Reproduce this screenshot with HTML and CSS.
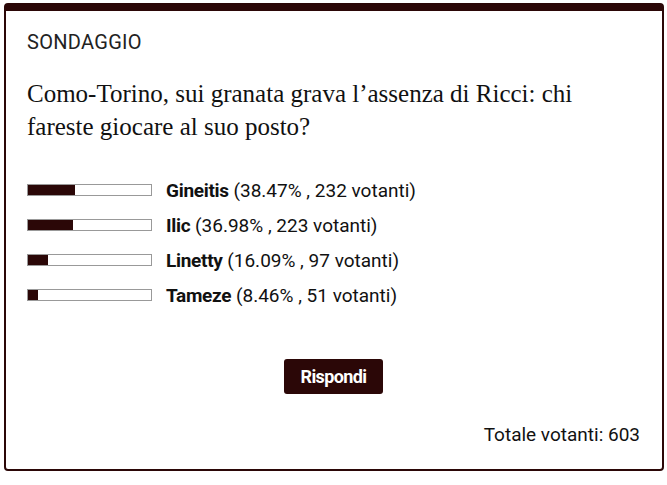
FILE: index.html
```html
<!DOCTYPE html>
<html lang="it">
<head>
    <meta charset="UTF-8">
    <meta name="viewport" content="width=device-width, initial-scale=1.0">
    <title>Sondaggio</title>
    <link rel="stylesheet" href="styles.css">
</head>
<body>

    <div class="poll-box">
        <!-- Header -->
        <div class="poll-label">SONDAGGIO</div>
        <h2 class="poll-question">Como-Torino, sui granata grava l’assenza di Ricci: chi fareste giocare al suo posto?</h2>

        <!-- Results -->
        <ul class="poll-results">
            <li class="poll-row">
                <span class="bar"><span class="bar-fill" style="width: 38.47%"></span></span>
                <span class="answer"><strong>Gineitis</strong> (38.47% , 232 votanti)</span>
            </li>
            <li class="poll-row">
                <span class="bar"><span class="bar-fill" style="width: 36.98%"></span></span>
                <span class="answer"><strong>Ilic</strong> (36.98% , 223 votanti)</span>
            </li>
            <li class="poll-row">
                <span class="bar"><span class="bar-fill" style="width: 16.09%"></span></span>
                <span class="answer"><strong>Linetty</strong> (16.09% , 97 votanti)</span>
            </li>
            <li class="poll-row">
                <span class="bar"><span class="bar-fill" style="width: 8.46%"></span></span>
                <span class="answer"><strong>Tameze</strong> (8.46% , 51 votanti)</span>
            </li>
        </ul>

        <div class="poll-actions">
            <button class="btn-reply">Rispondi</button>
        </div>

        <div class="poll-total">Totale votanti: 603</div>
    </div>

</body>
</html>
```

FILE: styles.css
```css
/* General Reset */
* {
    margin: 0;
    padding: 0;
    box-sizing: border-box;
}

body {
    font-family: 'Roboto', sans-serif;
    background-color: #fff;
    color: #111;
}

.poll-box {
    width: 660px;
    height: 468px;
    margin: 3px 0 0 4px;
    border: 2px solid #2b0707;
    border-top-width: 8px;
    border-radius: 4px;
    padding: 20px 22px 0 21px;
    display: flex;
    flex-direction: column;
}

.poll-label {
    font-size: 20px;
    line-height: 22px;
    color: #222;
    letter-spacing: 0.3px;
}

.poll-question {
    font-family: 'Liberation Serif', serif;
    font-weight: normal;
    font-size: 25px;
    line-height: 33px;
    color: #111;
    margin-top: 24px;
    padding-right: 40px;
}

.poll-results {
    list-style: none;
    margin-top: 36px;
    display: flex;
    flex-direction: column;
    gap: 13px;
}

.poll-row {
    display: flex;
    align-items: center;
    gap: 14px;
    height: 22px;
}

.bar {
    display: block;
    width: 125px;
    height: 12px;
    border: 1px solid #999;
    background-color: #fff;
}

.bar-fill {
    display: block;
    height: 100%;
    background-color: #2b0707;
}

.answer {
    font-size: 19px;
    color: #111;
}

.answer strong {
    font-weight: 700;
    letter-spacing: -0.3px;
}

.poll-actions {
    display: flex;
    justify-content: center;
    margin-top: 53px;
}

.btn-reply {
    background-color: #2b0707;
    color: #fff;
    border: none;
    border-radius: 3px;
    width: 99px;
    height: 35px;
    font-family: 'Roboto', sans-serif;
    font-weight: 700;
    font-size: 18px;
    letter-spacing: -0.6px;
    cursor: pointer;
}

.poll-total {
    text-align: right;
    font-size: 19px;
    margin-top: 29px;
    color: #111;
}
```
